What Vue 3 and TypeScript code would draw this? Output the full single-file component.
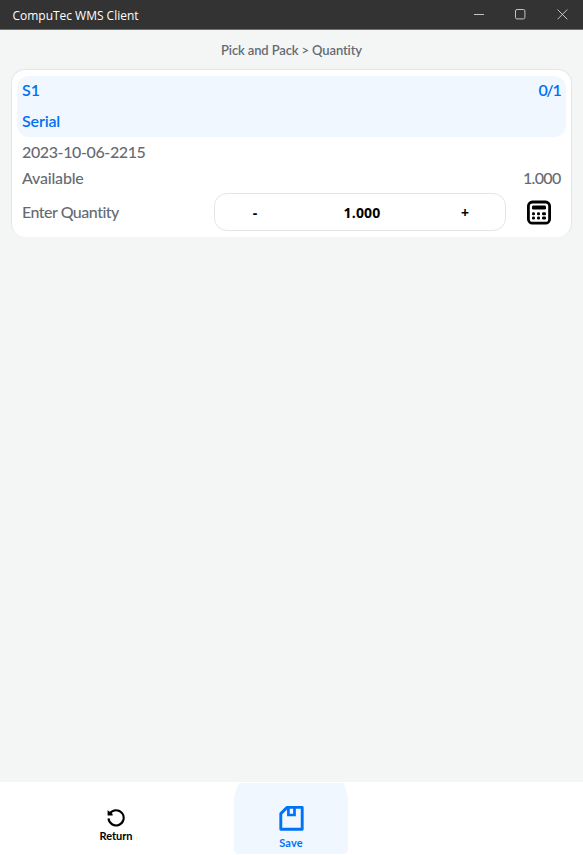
<script setup lang="ts">
import { ref, computed } from 'vue'

const quantity = ref<number>(1)
const shown = computed<string>(() => quantity.value.toFixed(3))

function step(delta: number): void {
  quantity.value = Math.max(0, quantity.value + delta)
}
</script>

<template>
  <div class="window">
    <header class="titlebar">
      <span class="title">CompuTec WMS Client</span>
      <div class="controls">
        <svg width="11" height="11" viewBox="0 0 11 11"><path d="M0 5.5H10" /></svg>
        <svg width="11" height="11" viewBox="0 0 11 11"><rect x="0.5" y="0.5" width="9.4" height="9.4" rx="1.5" /></svg>
        <svg width="11" height="11" viewBox="0 0 11 11"><path d="M0.5 0.5L10.3 10.3M10.3 0.5L0.5 10.3" /></svg>
      </div>
    </header>

    <main class="content">
      <div class="breadcrumb"><span class="t-crumb">Pick and Pack &gt; Quantity</span></div>
      <section class="card">
        <div class="card-head">
          <div class="line"><span class="t-code">S1</span><span class="t-count">0/1</span></div>
          <div class="line"><span class="t-serial">Serial</span></div>
        </div>
        <div class="row date"><span class="t-date">2023-10-06-2215</span></div>
        <div class="row available"><span class="t-avail">Available</span><span class="t-num">1.000</span></div>
        <div class="row entry">
          <span class="label"><span class="t-enter">Enter Quantity</span></span>
          <div class="stepper">
            <button @click="step(-1)">-</button>
            <span class="value">{{ shown }}</span>
            <button @click="step(1)">+</button>
          </div>
          <svg class="calc" width="24" height="25" viewBox="0 0 24 25">
            <g transform="translate(0 0.6)">
              <rect x="1.4" y="1.4" width="21.2" height="21.2" rx="4" fill="none" stroke="#000" stroke-width="2.8" />
              <rect x="5" y="5" width="14" height="4" rx="1.4" />
              <rect x="5" y="11.6" width="3" height="3" rx="1.3" />
              <rect x="10" y="11.6" width="3" height="3" rx="1.3" />
              <rect x="15" y="11.6" width="4" height="3" rx="1.3" />
              <rect x="5" y="16" width="3" height="3" rx="1.3" />
              <rect x="10" y="16" width="3" height="3" rx="1.3" />
              <rect x="15" y="16" width="4" height="3" rx="1.3" />
            </g>
          </svg>
        </div>
      </section>
    </main>

    <footer class="footer">
      <button class="action return">
        <svg width="18" height="19" viewBox="0 0 18 19">
          <path d="M2.9 5.4A7.6 7.6 0 1 1 1.5 10.4" fill="none" stroke="#000" stroke-width="2.1" />
          <path d="M0.6 2.2L2.4 3.6L4 4.4L5.6 6V7.4H0.6Z" />
        </svg>
        <span>Return</span>
      </button>
      <button class="action save">
        <svg width="26" height="26" viewBox="0 0 26 26" fill="none" stroke="#0072f5" stroke-width="2.9">
          <path d="M8.1 2.4H23.2V24.3H1.8V8.6Z" stroke-linejoin="round" />
          <path d="M9.4 2.4V10H15.5V2.4" stroke-width="2.7" />
        </svg>
        <span>Save</span>
      </button>
    </footer>
  </div>
</template>

<style>
body { margin: 0; background: #f4f6f6; }
</style>

<style scoped>
.window {
  width: 583px;
  height: 855px;
  display: flex;
  flex-direction: column;
  background: #f4f6f6;
  color: #666b73;
  font-family: Lato, "Open Sans", sans-serif;
  font-variant-ligatures: none;
  overflow: hidden;
}
.window * { box-sizing: border-box; }
span { white-space: nowrap; }
button { border: 0; padding: 0; background: none; font: inherit; color: inherit; }
.titlebar {
  height: 30px;
  flex: none;
  display: flex;
  align-items: center;
  justify-content: space-between;
  padding: 0 15px 0 12.5px;
  background: #333;
  border-bottom: 1px solid #746f72;
  color: #fff;
  font: 12px/18px "Open Sans", sans-serif;
}
.title { padding-top: 3px; letter-spacing: -0.02px; }
.controls { display: flex; gap: 31px; }
.controls svg { display: block; fill: none; stroke: #c4c4c4; stroke-width: 1; }
.controls svg:first-child { margin-right: -1px; }
.content { flex: 1; padding: 0 11px; }
.breadcrumb {
  height: 39px;
  text-align: center;
  font-size: 13px;
  font-weight: 600;
  line-height: 40px;
}
.t-crumb { letter-spacing: -0.13px; }
.card {
  height: 168px;
  padding: 6px 5px 0;
  background: #fff;
  border: 1px solid #e4e6e6;
  border-bottom: 0;
  border-radius: 14px;
  font-size: 16px;
  font-weight: 500;
}
.card-head {
  height: 61px;
  border-radius: 12px;
  background: #f0f7ff;
  color: #0072f5;
  font-weight: 600;
}
.line, .row { display: flex; justify-content: space-between; align-items: center; padding: 0 5px; }
.line { height: 29px; }
.line + .line { height: 33px; }
.line > span, .date > span, .available > span, .t-enter { padding-bottom: 2px; }
.t-count { letter-spacing: -1.3px; margin-right: 0.6px; }
.t-serial { letter-spacing: -0.15px; }
.t-date { letter-spacing: -0.38px; }
.t-avail { letter-spacing: -0.2px; }
.t-num { letter-spacing: -0.65px; margin-right: 0.4px; }
.t-enter { display: block; letter-spacing: -0.5px; }
.date { height: 31px; }
.available { height: 20px; }
.entry { height: 48px; }
.label { width: 192px; flex: none; }
.stepper {
  width: 292px;
  height: 38px;
  padding-top: 1px;
  display: grid;
  grid-template-columns: 80px 1fr 80px;
  align-items: center;
  text-align: center;
  border: 1px solid #e4e6e6;
  border-radius: 13px;
  color: #000;
  font: 700 14px/20px "Open Sans", sans-serif;
}
.value { padding-left: 4px; letter-spacing: 0.2px; }
.calc { margin: 0 10px 0 auto; }
.footer {
  height: 73px;
  flex: none;
  display: flex;
  background: #fff;
  color: #000;
  font-size: 11px;
  font-weight: 700;
}
.action {
  display: flex;
  flex-direction: column;
  align-items: center;
  line-height: 14px;
}
.return { width: 116px; margin-left: 58px; padding-top: 26px; }
.return span { margin-top: 2px; }
.save {
  width: 114px;
  height: 71px;
  margin: 1px 0 0 60px;
  padding-top: 22px;
  background: #f0f7ff;
  color: #0072f5;
  clip-path: polygon(6px 0, 109px 0, 111px 4px, 114px 14px, 114px 68px, 111px 71px, 3px 71px, 0 68px, 0 14px, 3px 4px);
}
.save svg { margin-left: 1px; }
.save span { margin-top: 5px; letter-spacing: 0.15px; }
</style>
